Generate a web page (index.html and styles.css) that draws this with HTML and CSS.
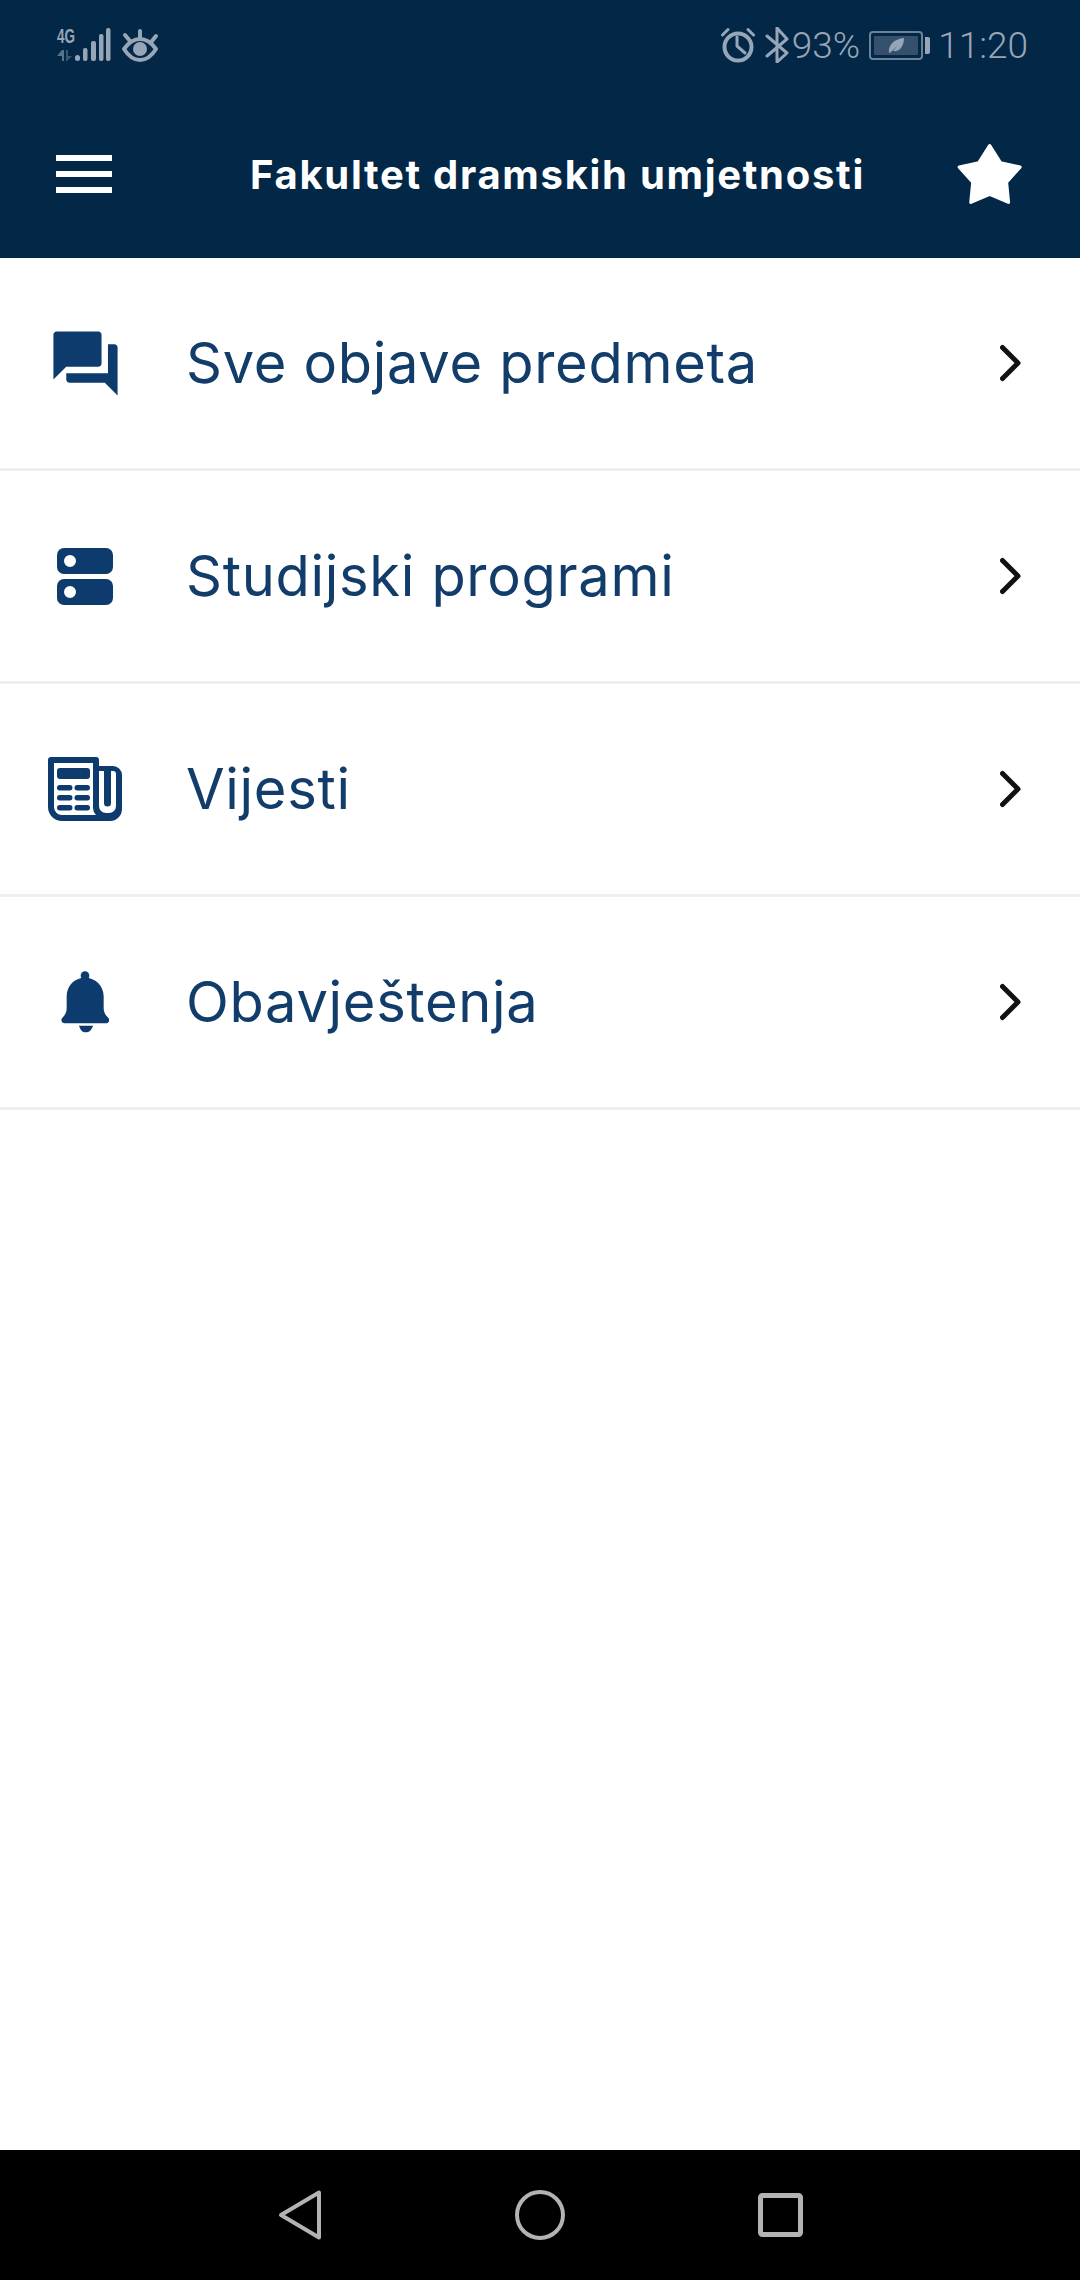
FILE: index.html
```html
<!DOCTYPE html>
<html lang="en">
  <head>
    <meta charset="UTF-8" />
    <meta name="viewport" content="width=device-width, initial-scale=1.0" />
    <title>Fakultet dramskih umjetnosti</title>
    <link rel="stylesheet" href="styles.css">
  </head>
  <body>
    <div class="phone">
      <header>
        <div class="status">
          <div class="status-left">
            <svg width="64" height="44" viewBox="-10 -5 64 44">
              <text x="0" y="14.5" class="net" textLength="18" lengthAdjust="spacingAndGlyphs">4G</text>
              <path d="M0 28l5-6h2v11H5v-5z" class="arrow-up" />
              <path d="M9 22h2v6h4l-5 5H9z" class="arrow-down" />
              <rect x="18" y="27" width="5" height="6" rx="2.5" class="bar" />
              <rect x="26" y="20" width="4.5" height="13" rx="2" class="bar" />
              <rect x="34" y="13" width="5" height="20" rx="2" class="bar" />
              <rect x="42" y="6" width="4.5" height="27" rx="2" class="bar" />
              <rect x="49" y="0" width="4.5" height="33" rx="2" class="bar" />
            </svg>
            <svg width="38" height="34" viewBox="0 0 38 34">
              <path d="M3 21C8 14 13 11 19 11S30 14 35 21C30 29 25 32 19 32S8 29 3 21z" class="line" />
              <circle cx="19" cy="21" r="7" class="bar" />
              <path d="M19 3v6M4 7l5 6M35 8l-4 5" class="line" />
            </svg>
          </div>
          <div class="status-right">
            <svg class="alarm" width="34" height="36" viewBox="0 0 34 36">
              <circle cx="17" cy="20" r="13.5" class="line" />
              <path d="M16 10v9l8 7" class="line thin" />
              <path d="M1.5 8L7 2.5M32.5 8L27 2.5" class="line thin" />
            </svg>
            <svg class="bt" width="24" height="36" viewBox="0 0 24 36">
              <path d="M2 9L22 26l-10 9V1l10 11L2 29" class="line thin" />
            </svg>
            <span class="pct">93%</span>
            <div class="battery">
              <div class="battery-box">
                <div class="battery-fill">
                  <svg width="17" height="17" viewBox="0 0 17 17">
                    <path d="M1 16C0 8 6 2 16 1c0 9-5 14-11 13l5-6-7 7z" class="bar" />
                  </svg>
                </div>
              </div>
              <div class="battery-tip"></div>
            </div>
            <span class="time">11:20</span>
          </div>
        </div>
        <div class="appbar">
          <div class="burger"><span></span><span></span><span></span></div>
          <h1>Fakultet dramskih umjetnosti</h1>
          <svg class="star" width="66" height="62" viewBox="832 426 198 188">
            <polygon points="930,434 963,486 1022,499 981,545 987,606 930,581 873,606 879,545 838,499 897,486" />
          </svg>
        </div>
      </header>

      <main>
        <a class="row">
          <div class="row-icon">
            <svg width="77" height="77" viewBox="0 0 24 24">
              <path d="M21 6h-2v9H6v2c0 .55.45 1 1 1h11l4 4V7c0-.55-.45-1-1-1zm-4 6V3c0-.55-.45-1-1-1H3c-.55 0-1 .45-1 1v14l4-4h10c.55 0 1-.45 1-1z" />
            </svg>
          </div>
          <span class="row-label">Sve objave predmeta</span>
          <svg class="chevron" width="24" height="38" viewBox="0 0 24 38"><path d="M2.5 3.5L18 19 2.5 34.5" /></svg>
        </a>
        <a class="row">
          <div class="row-icon">
            <svg width="58" height="58" viewBox="0 0 58 58">
              <path fill-rule="evenodd" d="M8 1h42a7 7 0 0 1 7 7v12a7 7 0 0 1-7 7H8a7 7 0 0 1-7-7V8a7 7 0 0 1 7-7zm6 7a6 6 0 1 0 0 12 6 6 0 0 0 0-12z" />
              <path fill-rule="evenodd" d="M8 32h42a7 7 0 0 1 7 7v12a7 7 0 0 1-7 7H8a7 7 0 0 1-7-7V39a7 7 0 0 1 7-7zm6 7a6 6 0 1 0 0 12 6 6 0 0 0 0-12z" />
            </svg>
          </div>
          <span class="row-label">Studijski programi</span>
          <svg class="chevron" width="24" height="38" viewBox="0 0 24 38"><path d="M2.5 3.5L18 19 2.5 34.5" /></svg>
        </a>
        <a class="row">
          <div class="row-icon">
            <svg width="74" height="64" viewBox="0 0 74 64">
              <path fill-rule="evenodd" d="M3 0h45a3 3 0 0 1 3 3v6h14a9 9 0 0 1 9 9v34a12 12 0 0 1-12 12H14A14 14 0 0 1 0 50V3a3 3 0 0 1 3-3zm3 6v44a8 8 0 0 0 8 8h34a10 10 0 0 1-3-7V6zM51 14V49a7 7 0 0 0 7 7h3a7 7 0 0 0 7-7V17a3 3 0 0 0-3-3h-2V46a3.5 3.5 0 0 1-7 0V14z" />
              <rect x="9" y="11" width="33" height="11" rx="3" />
              <rect x="9" y="28" width="15.5" height="5.5" rx="2.7" />
              <rect x="26.5" y="28" width="15.5" height="5.5" rx="2.7" />
              <rect x="9" y="38" width="15.5" height="5.5" rx="2.7" />
              <rect x="26.5" y="38" width="15.5" height="5.5" rx="2.7" />
              <rect x="9" y="48" width="15.5" height="5.5" rx="2.7" />
              <rect x="26.5" y="48" width="15.5" height="5.5" rx="2.7" />
            </svg>
          </div>
          <span class="row-label">Vijesti</span>
          <svg class="chevron" width="24" height="38" viewBox="0 0 24 38"><path d="M2.5 3.5L18 19 2.5 34.5" /></svg>
        </a>
        <a class="row">
          <div class="row-icon">
            <svg width="48" height="62" viewBox="94 64 144 186">
              <circle cx="166" cy="78" r="13" />
              <path d="M166 84C135 84 111 108 111 140V175C111 192 102 200 97 206C92 214 98 221 106 221H228C236 221 242 214 237 206C232 200 222 192 222 175V140C222 108 197 84 166 84Z" />
              <path d="M148 228H190C186 241 178 248 168 248C158 248 152 241 148 228Z" />
            </svg>
          </div>
          <span class="row-label">Obavještenja</span>
          <svg class="chevron" width="24" height="38" viewBox="0 0 24 38"><path d="M2.5 3.5L18 19 2.5 34.5" /></svg>
        </a>
      </main>

      <footer>
        <svg width="44" height="52" viewBox="0 0 44 52">
          <path d="M41 3.5V48.5L3 26z" />
        </svg>
        <svg class="nav-home" width="50" height="52" viewBox="0 0 50 52">
          <circle cx="25" cy="26" r="23" />
        </svg>
        <svg class="nav-recent" width="45" height="44" viewBox="0 0 45 44">
          <rect x="2.5" y="2.5" width="40" height="39" rx="2" />
        </svg>
      </footer>
    </div>
  </body>
</html>
```

FILE: styles.css
```css
* {
  box-sizing: border-box;
}

body {
  margin: 0;
  background-color: white;
  font-family: "Inter", "Noto Sans", sans-serif;
}

.phone {
  display: flex;
  flex-direction: column;
  width: 1080px;
  height: 2280px;
}

header {
  background-color: #022747;
  height: 258px;
}

.status {
  display: flex;
  justify-content: space-between;
  align-items: center;
  height: 90px;
  padding: 0 52px 0 47px;
  color: #97a6b6;
}

.status-left,
.status-right {
  display: flex;
  align-items: center;
}

.status-left {
  gap: 10px;
}

.status-right {
  font-family: "Roboto", sans-serif;
  font-weight: 300;
  font-size: 37px;
}

.net {
  font-family: "Liberation Sans Narrow", "Liberation Sans", sans-serif;
  font-weight: bold;
  font-size: 20px;
  fill: #97a6b6;
}

.arrow-up {
  fill: #5a7288;
}

.arrow-down {
  fill: #3c566f;
}

.bar {
  fill: #97a6b6;
}

.line {
  fill: none;
  stroke: #97a6b6;
  stroke-width: 4;
  stroke-linecap: round;
  stroke-linejoin: round;
}

.thin {
  stroke-width: 3;
}

.bt {
  margin-left: 10px;
}

.pct {
  margin-left: 3px;
}

.battery {
  display: flex;
  align-items: center;
  gap: 2px;
  margin-left: 9px;
}

.battery-box {
  width: 54px;
  height: 29px;
  padding: 3px;
  border: 2px solid #6d8296;
  border-radius: 4px;
}

.battery-fill {
  display: flex;
  justify-content: center;
  align-items: center;
  height: 100%;
  background-color: #34506c;
  border-radius: 1px;
}

.battery-tip {
  width: 5px;
  height: 17px;
  background-color: #97a6b6;
  border-radius: 0 2px 2px 0;
}

.time {
  margin-left: 8px;
}

.appbar {
  display: flex;
  align-items: center;
  height: 168px;
  padding: 0 57px 0 56px;
}

.burger {
  display: flex;
  flex-direction: column;
  gap: 10px;
  width: 56px;
}

.burger span {
  height: 6px;
  background-color: white;
}

h1 {
  margin: 0 0 0 138px;
  color: white;
  font-size: 40px;
  font-weight: 700;
  letter-spacing: 1.7px;
  white-space: nowrap;
}

.star {
  margin-left: auto;
}

.star polygon {
  fill: white;
  stroke: white;
  stroke-width: 10;
  stroke-linejoin: round;
}

main {
  flex: 1;
}

.row {
  display: flex;
  align-items: center;
  height: 213px;
  border-bottom: 3px solid #eeeeee;
  padding-right: 56px;
}

.row-icon {
  display: flex;
  justify-content: center;
  align-items: center;
  width: 170px;
  margin-right: 16px;
}

.row-icon svg {
  fill: #0d3b6e;
}

.row-label {
  flex: 1;
  color: #123c69;
  font-size: 56px;
  font-weight: 400;
  letter-spacing: 0.7px;
}

.chevron path {
  fill: none;
  stroke: #111111;
  stroke-width: 5;
  stroke-linecap: round;
  stroke-linejoin: round;
}

footer {
  display: flex;
  align-items: center;
  height: 130px;
  padding-left: 278px;
  background-color: black;
}

footer svg {
  fill: none;
  stroke: #b3b3b3;
  stroke-width: 4;
  stroke-linejoin: round;
}

.nav-home {
  margin-left: 193px;
}

.nav-recent {
  margin-left: 193px;
}

.nav-recent rect {
  stroke-width: 5;
}
```
